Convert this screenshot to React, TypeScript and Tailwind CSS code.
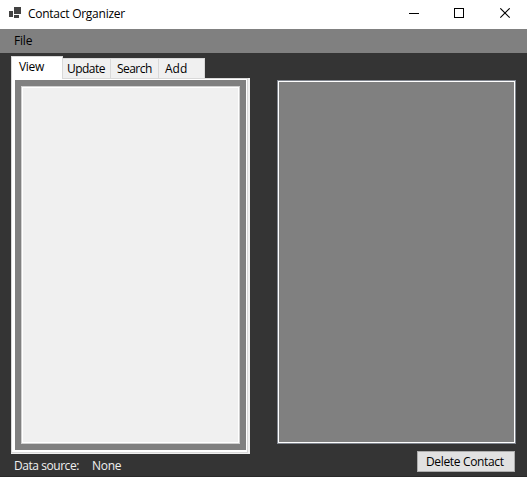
import type { ReactNode } from "react";

function TitleBar() {
  return (
    <header className="flex h-[29px] shrink-0 items-start bg-white text-black">
      <svg className="ml-[9px] mt-[6px] h-[13px] w-[13px]" viewBox="0 0 13 13" shapeRendering="crispEdges" fill="#424242">
        <path d="M0 5h4v6H0zM5 1h7v7H5zM5 9h5v3H5z" />
      </svg>
      <h1 className="ml-1.5 mt-[5px] w-[110px] text-[12px] leading-[18px] tracking-[-0.26px]">Contact Organizer</h1>
      <svg className="ml-auto mr-[12px] mt-[8px] h-[11px] w-[106px]" viewBox="0 0 106 11" fill="none" stroke="black">
        <path d="M0 5.5h10" shapeRendering="crispEdges" />
        <path d="M45.5 .5h9v9h-9z" shapeRendering="crispEdges" />
        <path d="M91.3.3l9.4 9.4M100.7.3l-9.4 9.4" strokeWidth="1.1" />
      </svg>
    </header>
  );
}

function Tab({ className, children }: { className: string; children: ReactNode }) {
  return (
    <button className={`h-5 border-t border-r border-[#d9d9d9] bg-[#f0f0f0] text-left leading-[20px] ${className}`}>
      {children}
    </button>
  );
}

export default function App() {
  return (
    <div className="flex h-[477px] w-[527px] flex-col overflow-hidden bg-[#343434] font-['Open_Sans','Noto_Sans',sans-serif] text-[12px] whitespace-nowrap text-black">
      <TitleBar />
      <nav className="h-6 shrink-0 bg-[#808080] pl-[14px] leading-[24px] tracking-[-0.2px]">File</nav>
      <main className="flex grow items-start border-b border-[#292929] pl-[11px]">
        <section className="mt-[3px] w-[239px]">
          <div className="flex h-[22px] items-start">
            <button className="relative h-[23px] w-[52px] border-t border-r border-l border-[#d9d9d9] bg-white pb-[2px] pl-[7px] text-left leading-[20px] tracking-[-0.3px]">View</button>
            <div className="mt-[2px] flex">
              <Tab className="w-[48px] pl-[4px] tracking-[-0.55px]">Update</Tab>
              <Tab className="w-[48px] pl-[6px] tracking-[-0.55px]">Search</Tab>
              <Tab className="w-[46px] pl-[6px]">Add</Tab>
            </div>
          </div>
          <div className="h-[376px] border-r-2 border-b border-[#f0f0f0] bg-white">
            <div className="h-[375px] border border-[#d9d9d9] pt-px pr-px pl-[3px]">
              <div className="h-[370px] bg-[#808080] p-[6px]">
                <div className="h-[358px] border border-[#d0d0d0] bg-[#f0f0f0]">
                  <div className="h-full border border-white" />
                </div>
              </div>
            </div>
          </div>
          <footer className="flex h-[22px] pl-[3px] leading-[24px] text-[#f0f0f0]">
            <span className="w-[78px] tracking-[-0.45px]">Data source:</span>
            <span className="tracking-[-0.3px]">None</span>
          </footer>
        </section>
        <section className="mt-[27px] ml-[27px] flex w-[239px] flex-col items-end">
          <div className="h-[364px] w-full border border-[#828790] bg-[#808080]">
            <div className="h-full border border-white" />
          </div>
          <button className="mt-[7px] mr-px h-[21px] w-[98px] border border-[#adadad] bg-[#e1e1e1] pl-[8px] text-left leading-[20px] tracking-[-0.34px]">Delete Contact</button>
        </section>
      </main>
    </div>
  );
}
